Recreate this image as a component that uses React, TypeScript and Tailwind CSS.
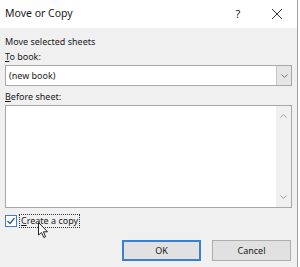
import React from "react";

const font = { fontFamily: '"Noto Sans", "Segoe UI", sans-serif' };

export default function App() {
  return (
    <div className="w-[300px] h-[267px] flex bg-white overflow-hidden" style={font}>
      <div className="relative w-[298px] h-[267px] flex flex-col border-r border-[#a0a0a0]">
        {/* Title bar */}
        <div className="h-[28px] bg-white flex items-center pl-[5px] text-[10.5px] text-[#1a1a1a]">
          <span className="flex-1">Move or Copy</span>
          <span className="w-[14px] text-center mr-[26px] text-[11px]">?</span>
          <svg width="12" height="12" viewBox="0 0 12 12" className="mr-[14px]">
            <path d="M1 1 L11 11 M11 1 L1 11" stroke="#333" strokeWidth="1" fill="none" />
          </svg>
        </div>
        {/* Body */}
        <div className="flex-1 bg-[#f0f0f0] flex flex-col px-[5px] pt-[6px] text-[9px] text-[#1a1a1a]">
          <div className="h-[15px] leading-[15px]">Move selected sheets</div>
          <div className="h-[15px] leading-[15px]"><span className="underline">T</span>o book:</div>
          <div className="mt-[1px] h-[21px] w-[287px] flex bg-white border border-[#a8a8a8]">
            <div className="flex-1 flex items-center pl-[3px]">(new book)</div>
            <div className="w-[15px] bg-[#e6e6e6] border-l border-[#c8c8c8] flex items-center justify-center">
              <svg width="7" height="4" viewBox="0 0 7 4">
                <path d="M0.5 0.5 L3.5 3.5 L6.5 0.5" stroke="#707070" strokeWidth="1" fill="none" />
              </svg>
            </div>
          </div>
          <div className="mt-[3px] h-[16px] leading-[16px]"><span className="underline">B</span>efore sheet:</div>
          <div className="h-[103px] w-[287px] flex bg-white border border-[#a8a8a8]">
            <div className="flex-1" />
            <div className="w-[15px] bg-[#f0f0f0] flex flex-col items-center justify-between py-[8px]">
              <svg width="7" height="4" viewBox="0 0 7 4">
                <path d="M0.5 3.5 L3.5 0.5 L6.5 3.5" stroke="#a0a0a0" strokeWidth="1" fill="none" />
              </svg>
              <svg width="7" height="4" viewBox="0 0 7 4">
                <path d="M0.5 0.5 L3.5 3.5 L6.5 0.5" stroke="#a0a0a0" strokeWidth="1" fill="none" />
              </svg>
            </div>
          </div>
          <div className="mt-[6px] h-[14px] flex items-center">
            <div className="w-[12px] h-[12px] border border-[#3c7fc4] bg-white flex items-center justify-center">
              <svg width="10" height="10" viewBox="0 0 10 10">
                <path d="M1.5 5 L4 7.5 L8.5 2" stroke="#2a5a90" strokeWidth="1.2" fill="none" />
              </svg>
            </div>
            <div className="ml-[2px] h-[14px] px-[1px] flex items-center border border-dotted border-[#333]">
              <span><span className="underline">C</span>reate a copy</span>
            </div>
          </div>
          <div className="mt-[12px] flex justify-end gap-[11px] pr-[1px]">
            <div className="w-[79px] h-[21px] bg-[#e1e1e1] border-2 border-[#3d7fcf] flex items-center justify-center">OK</div>
            <div className="w-[79px] h-[21px] bg-[#e1e1e1] border border-[#adadad] flex items-center justify-center">Cancel</div>
          </div>
        </div>
        {/* Mouse cursor */}
        <svg className="absolute left-[38px] top-[222px]" width="12" height="17" viewBox="0 0 12 17">
          <path d="M0.5 0.5 L0.5 13 L3.5 10.5 L5.8 15.5 L7.6 14.7 L5.4 9.8 L9.5 9.8 Z" fill="white" stroke="#222" strokeWidth="1" />
        </svg>
      </div>
    </div>
  );
}
